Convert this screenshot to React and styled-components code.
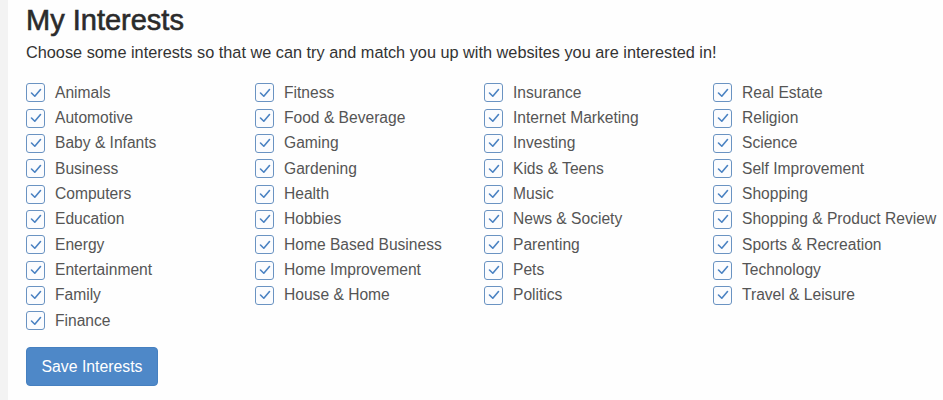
import React from 'react';
import styled, { createGlobalStyle } from 'styled-components';

const GlobalStyle = createGlobalStyle`
  html, body {
    margin: 0;
    padding: 0;
    background: #f3f3f3;
  }
  body {
    font-family: "Liberation Sans", Arial, sans-serif;
  }
`;

const COLUMNS = [
  ['Animals', 'Automotive', 'Baby & Infants', 'Business', 'Computers', 'Education', 'Energy', 'Entertainment', 'Family', 'Finance'],
  ['Fitness', 'Food & Beverage', 'Gaming', 'Gardening', 'Health', 'Hobbies', 'Home Based Business', 'Home Improvement', 'House & Home'],
  ['Insurance', 'Internet Marketing', 'Investing', 'Kids & Teens', 'Music', 'News & Society', 'Parenting', 'Pets', 'Politics'],
  ['Real Estate', 'Religion', 'Science', 'Self Improvement', 'Shopping', 'Shopping & Product Review', 'Sports & Recreation', 'Technology', 'Travel & Leisure'],
];

const Page = styled.div`
  margin-left: 8px;
  min-height: 400px;
  background: #fefefe;
  padding: 4px 0 0 18px;
  box-sizing: border-box;
`;

const Title = styled.h1`
  margin: 0;
  font-size: 29px;
  line-height: 32px;
  font-weight: normal;
  color: #2b2b2b;
  -webkit-text-stroke: 0.6px #2b2b2b;
`;

const Intro = styled.p`
  margin: 6px 0 0;
  font-size: 16.3px;
  line-height: 20px;
  color: #333;
`;

const Grid = styled.div`
  display: grid;
  grid-template-columns: repeat(4, 229px);
  align-items: start;
  margin-top: 18px;
`;

const Column = styled.div`
  display: flex;
  flex-direction: column;
`;

const Row = styled.label`
  display: flex;
  align-items: center;
  height: 25.35px;
  font-size: 15.6px;
  color: #555;
  white-space: nowrap;
`;

const Box = styled.span`
  width: 19px;
  height: 19px;
  box-sizing: border-box;
  border: 1.5px solid #6a93c2;
  border-radius: 3px;
  background: #fbfcfe;
  margin-right: 10px;
  display: flex;
  align-items: center;
  justify-content: center;
  flex: none;
`;

const Button = styled.button`
  margin-top: 14px;
  width: 132px;
  height: 39px;
  border: 1px solid #4680c0;
  border-radius: 4px;
  background: #4e88c8;
  color: #fff;
  font-family: "Liberation Sans", Arial, sans-serif;
  font-size: 15.8px;
  padding: 0;
`;

const Check = () => (
  <Box>
    <svg width="12" height="10" viewBox="0 0 12 10" fill="none">
      <path d="M1.5 5 L4.8 8.2 L10.5 1.5" stroke="#4a82c2" strokeWidth="1.6" strokeLinecap="round" strokeLinejoin="round" />
    </svg>
  </Box>
);

export default function App() {
  return (
    <>
      <GlobalStyle />
      <Page>
        <Title>My Interests</Title>
        <Intro>Choose some interests so that we can try and match you up with websites you are interested in!</Intro>
        <Grid>
          {COLUMNS.map((col, i) => (
            <Column key={i}>
              {col.map((name) => (
                <Row key={name}>
                  <Check />
                  {name}
                </Row>
              ))}
            </Column>
          ))}
        </Grid>
        <Button type="button">Save Interests</Button>
      </Page>
    </>
  );
}
